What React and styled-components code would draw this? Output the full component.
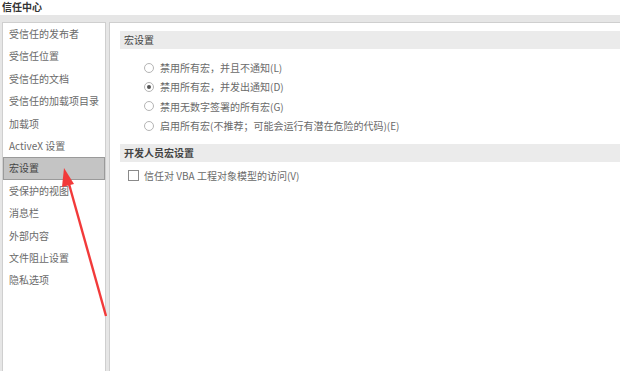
import React from "react";
import styled, { createGlobalStyle } from "styled-components";

const Global = createGlobalStyle`
  html, body {
    margin: 0;
    padding: 0;
    background: #ffffff;
    font-family: "Noto Sans CJK SC", "Noto Sans", sans-serif;
    overflow: hidden;
  }
`;

const Window = styled.div`
  position: relative;
  width: 620px;
  height: 371px;
  display: flex;
  flex-direction: column;
  background: #ffffff;
`;

const TitleBar = styled.div`
  height: 15px;
  padding-left: 2px;
  font-size: 10px;
  line-height: 14px;
  font-weight: bold;
  color: #333;
`;

const Body = styled.div`
  flex: 1;
  display: flex;
  gap: 3px;
  padding: 7px 0 0 2px;
  background: #e6e6e6;
`;

const Nav = styled.div`
  width: 102px;
  background: #fff;
  border: 1px solid #cfcfcf;
  border-bottom: none;
  display: flex;
  flex-direction: column;
`;

const NavItem = styled.div`
  height: 22.4px;
  line-height: 20px;
  padding-left: 5px;
  font-size: 10px;
  color: ${(p) => (p.$active ? "#444" : "#6a6a6a")};
  background: ${(p) => (p.$active ? "#c4c4c4" : "transparent")};
  border: 1.5px solid ${(p) => (p.$active ? "#9a9a9a" : "transparent")};
  box-sizing: border-box;
  white-space: nowrap;
`;

const Main = styled.div`
  flex: 1;
  background: #fff;
  border-top: 1px solid #cfcfcf;
  border-left: 1px solid #cfcfcf;
  padding: 8px 0 0 10px;
  display: flex;
  flex-direction: column;
`;

const SectionHead = styled.div`
  height: 18px;
  line-height: 18px;
  background: #ebebeb;
  padding-left: 4px;
  font-size: 10px;
  color: #444;
  font-weight: ${(p) => (p.$bold ? "bold" : "normal")};
`;

const Options = styled.div`
  display: flex;
  flex-direction: column;
  padding: 9px 0 9px 24px;
`;

const Option = styled.div`
  height: 19.3px;
  display: flex;
  align-items: center;
  gap: 6px;
  font-size: 10px;
  color: #6a6a6a;
  white-space: nowrap;
`;

const Radio = styled.span`
  width: 8px;
  height: 8px;
  border-radius: 50%;
  border: 1px solid #b4b4b4;
  background: #fff;
  display: flex;
  align-items: center;
  justify-content: center;
  &::after {
    content: "";
    width: 4px;
    height: 4px;
    border-radius: 50%;
    background: ${(p) => (p.$on ? "#555" : "transparent")};
  }
`;

const CheckRow = styled.div`
  display: flex;
  align-items: center;
  gap: 5px;
  padding: 6px 0 0 8px;
  font-size: 10px;
  color: #6a6a6a;
  white-space: nowrap;
`;

const Box = styled.span`
  width: 9px;
  height: 9px;
  border: 1px solid #8a8a8a;
  background: #fff;
`;

const Arrow = styled.svg`
  position: absolute;
  left: 0;
  top: 0;
  pointer-events: none;
`;

const navItems = [
  "受信任的发布者",
  "受信任位置",
  "受信任的文档",
  "受信任的加载项目录",
  "加载项",
  "ActiveX 设置",
  "宏设置",
  "受保护的视图",
  "消息栏",
  "外部内容",
  "文件阻止设置",
  "隐私选项",
];

const radios = [
  "禁用所有宏，并且不通知(L)",
  "禁用所有宏，并发出通知(D)",
  "禁用无数字签署的所有宏(G)",
  "启用所有宏(不推荐；可能会运行有潜在危险的代码)(E)",
];

export default function App() {
  return (
    <Window>
      <Global />
      <TitleBar>信任中心</TitleBar>
      <Body>
        <Nav>
          {navItems.map((t) => (
            <NavItem key={t} $active={t === "宏设置"}>
              {t}
            </NavItem>
          ))}
        </Nav>
        <Main>
          <SectionHead>宏设置</SectionHead>
          <Options>
            {radios.map((t, i) => (
              <Option key={t}>
                <Radio $on={i === 1} />
                {t}
              </Option>
            ))}
          </Options>
          <SectionHead $bold>开发人员宏设置</SectionHead>
          <CheckRow>
            <Box />
            信任对 VBA 工程对象模型的访问(V)
          </CheckRow>
        </Main>
      </Body>
      <Arrow width="620" height="371" viewBox="0 0 620 371">
        <path d="M106 316 L69 184" stroke="#f23a3a" strokeWidth="2.4" fill="none" />
        <path d="M64 168 L74 184 L62 187 Z" fill="#f23a3a" />
      </Arrow>
    </Window>
  );
}
